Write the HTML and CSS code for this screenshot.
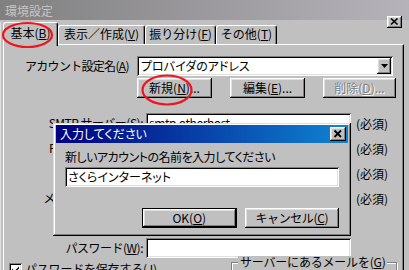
FILE: index.html
```
<!DOCTYPE html>
<html lang="ja">
<head>
<meta charset="utf-8">
<title>環境設定</title>
<link rel="stylesheet" href="styles.css">
</head>
<body>
<div class="screen">
  <div class="titlebar">
    <span class="title">環境設定</span>
    <span class="xbtn main-x"><svg width="15" height="12" viewBox="0 0 15 12"><path d="M4 2.5 L10.5 8.5 M10.5 2.5 L4 8.5" stroke="#000" stroke-width="1.7" fill="none"/></svg></span>
  </div>
  <div class="frame">
    <div class="tabs">
      <div class="tab sel t1">基本(<u>B</u>)</div>
      <div class="tab t2">表示／作成(<u>V</u>)</div>
      <div class="tab t3">振り分け(<u>F</u>)</div>
      <div class="tab t4">その他(<u>T</u>)</div>
    </div>
    <div class="panel">
      <div class="acct">
        <span class="acct-label">アカウント設定名(<u>A</u>)</span>
        <div class="combo">
          <span class="combo-text">プロバイダのアドレス</span>
          <span class="dropbtn"><svg width="7" height="4" viewBox="0 0 7 4"><path d="M0 0 H7 L3.5 4 Z" fill="#000"/></svg></span>
        </div>
      </div>
      <div class="acct-btns">
        <div class="btn b-new">新規(<u>N</u>)...</div>
        <div class="btn b-edit">編集(<u>E</u>)...</div>
        <div class="btn b-del disabled">削除(<u>D</u>)...</div>
      </div>
      <div class="form">
        <div class="frow"><span class="flabel">SMTP サーバー(<u>S</u>):</span><div class="field">smtp.otherhost</div><span class="req">(必須)</span></div>
        <div class="frow"><span class="flabel">POP3 サーバー(<u>P</u>):</span><div class="field"></div><span class="req">(必須)</span></div>
        <div class="frow"><span class="flabel"></span><div class="field"></div><span class="req">(必須)</span></div>
        <div class="frow"><span class="flabel">メールアドレス(<u>M</u>):</span><div class="field"></div><span class="req">(必須)</span></div>
        <div class="frow"><span class="flabel"></span><div class="field"></div></div>
        <div class="frow last"><span class="flabel">パスワード(<u>W</u>):</span><div class="field"></div></div>
      </div>
      <div class="bottom">
        <div class="check">
          <span class="cbox"><svg width="9" height="9" viewBox="0 0 9 9"><path d="M1 3.5 L3.5 6 L8 1.5 V3.5 L3.5 8 L1 5.5 Z" fill="#000"/></svg></span>
          <span class="check-text">パスワードを保存する(<u>J</u>)</span>
        </div>
        <fieldset class="group"><legend>サーバーにあるメールを(<u>G</u>)</legend></fieldset>
      </div>
    </div>
  </div>

  <div class="dialog">
    <div class="dlg-title">
      <span class="dlg-title-text">入力してください</span>
      <span class="xbtn dlg-x"><svg width="16" height="14" viewBox="0 0 16 14"><path d="M4.5 3.5 L11 10 M11 3.5 L4.5 10" stroke="#000" stroke-width="1.8" fill="none"/></svg></span>
    </div>
    <div class="dlg-body">
      <div class="dlg-text">新しいアカウントの名前を入力してください</div>
      <div class="field dlg-field">さくらインターネット</div>
      <div class="dlg-btns">
        <div class="btn default b-ok">OK(<u>O</u>)</div>
        <div class="btn b-cancel">キャンセル(<u>C</u>)</div>
      </div>
    </div>
  </div>

  <svg class="marks" width="409" height="270" viewBox="0 0 409 270">
    <ellipse cx="27.5" cy="35" rx="24.5" ry="12" fill="none" stroke="#f0141e" stroke-width="2.2"/>
    <ellipse cx="167" cy="90" rx="24.5" ry="14.5" fill="none" stroke="#f0141e" stroke-width="2.2"/>
  </svg>
</div>
</body>
</html>
```
FILE: styles.css
```
* { box-sizing: border-box; }
html, body { margin: 0; padding: 0; }
body {
  width: 409px;
  height: 270px;
  overflow: hidden;
  background: #c0c0c0;
  font-family: "Noto Sans CJK JP", "Noto Sans", sans-serif;
  font-size: 12px;
  color: #000;
}
u { text-decoration: underline; text-underline-offset: 1px; }

.screen {
  position: relative;
  width: 409px;
  height: 270px;
  overflow: hidden;
}

/* main title bar (inactive) */
.titlebar {
  height: 20px;
  display: flex;
  align-items: flex-start;
  padding-left: 5px;
  background: linear-gradient(to right, #808080, #b6b2ba);
}
.title {
  color: #c4c4c4;
  line-height: 20px;
  padding-top: 1px;
}
.xbtn {
  display: flex;
  background: #c0c0c0;
  box-shadow: inset -1px -1px #000, inset 1px 1px #fff, inset -2px -2px #808080, inset 2px 2px #dfdfdf;
}
.main-x {
  margin-left: auto;
  margin-right: 7px;
  margin-top: 16px;
  width: 15px;
  height: 12px;
  position: relative;
  z-index: 2;
}

/* tabs */
.frame {
  margin-top: 2px;
  border-left: 1px solid #dfdfdf;
}
.tabs {
  display: flex;
  align-items: flex-end;
  height: 22px;
  padding-left: 2px;
  position: relative;
  z-index: 1;
}
.tab {
  height: 19px;
  line-height: 16px;
  text-align: center;
  white-space: nowrap;
  background: #c0c0c0;
  border-top: 1px solid #fff;
  border-left: 1px solid #fff;
  border-right: 1px solid #000;
  border-radius: 3px 3px 0 0;
  box-shadow: inset -1px 0 #808080;
}
.tab.sel {
  height: 24px;
  margin-bottom: -2px;
  padding-top: 2px;
}
.t1 { width: 55px; }
.t2 { width: 87px; }
.t3 { width: 71px; }
.t4 { width: 61px; }

/* panel */
.panel {
  width: 401px;
  height: 240px;
  margin-left: 2px;
  border-top: 1px solid #fff;
  border-left: 1px solid #fff;
  border-right: 1px solid #000;
  box-shadow: inset -1px 0 #808080;
}
.acct {
  display: flex;
  align-items: center;
  margin-top: 11px;
  padding-left: 21px;
  height: 20px;
}
.acct-label {
  width: 112px;
  line-height: 20px;
  white-space: nowrap;
  letter-spacing: -0.7px;
}
.combo {
  width: 256px;
  height: 20px;
  background: #fff;
  display: flex;
  align-items: center;
  padding: 2px;
  box-shadow: inset 1px 1px #808080, inset -1px -1px #fff, inset 2px 2px #000, inset -2px -2px #dfdfdf;
}
.combo-text { flex: 1; padding-left: 2px; line-height: 16px; font-feature-settings: "palt"; }
.dropbtn {
  width: 14px;
  height: 16px;
  display: flex;
  align-items: center;
  justify-content: center;
  background: #c0c0c0;
  box-shadow: inset -1px -1px #000, inset 1px 1px #fff, inset -2px -2px #808080, inset 2px 2px #dfdfdf;
}

.btn {
  height: 20px;
  line-height: 20px;
  text-align: center;
  white-space: nowrap;
  background: #c0c0c0;
  box-shadow: inset -1px -1px #000, inset 1px 1px #fff, inset -2px -2px #808080, inset 2px 2px #dfdfdf;
}
.btn.default { border: 1px solid #000; line-height: 18px; }
.btn.disabled { color: #808080; text-shadow: 1px 1px 0 #fff; }

.acct-btns {
  display: flex;
  margin-top: 2px;
  padding-left: 133px;
  gap: 18px;
}
.b-new, .b-edit { width: 75px; }
.b-del { width: 73px; }

/* form */
.form { margin-top: 15px; }
.frow {
  display: flex;
  align-items: flex-start;
  height: 25px;
}
.frow.last { height: 20px; }
.flabel {
  width: 139px;
  margin-right: 3px;
  text-align: right;
  line-height: 20px;
  white-space: nowrap;
  letter-spacing: -0.5px;
}
.field {
  width: 205px;
  height: 20px;
  background: #fff;
  padding: 0 3px;
  line-height: 20px;
  letter-spacing: -0.4px;
  white-space: nowrap;
  box-shadow: inset 1px 1px #808080, inset -1px -1px #fff, inset 2px 2px #000, inset -2px -2px #dfdfdf;
}
.req { margin-left: 5px; line-height: 22px; }

/* bottom */
.bottom {
  display: flex;
  align-items: flex-start;
  margin-top: -2px;
}
.check {
  display: flex;
  align-items: center;
  gap: 3px;
  margin-left: 5px;
  margin-top: 6px;
}
.cbox {
  width: 13px;
  height: 13px;
  background: #fff;
  display: flex;
  align-items: center;
  justify-content: center;
  box-shadow: inset 1px 1px #808080, inset -1px -1px #fff, inset 2px 2px #000, inset -2px -2px #dfdfdf;
}
.check-text { line-height: 14px; white-space: nowrap; letter-spacing: -0.2px; }
.group {
  margin: 0 6px 0 auto;
  padding: 0;
  width: 166px;
  height: 30px;
  border: 1px solid #808080;
  box-shadow: 1px 1px 0 #fff, inset 1px 1px 0 #fff;
}
.group legend {
  margin-left: 6px;
  padding: 0 2px;
  line-height: 12px;
  background: #c0c0c0;
  white-space: nowrap;
  letter-spacing: -0.2px;
}

/* dialog */
.dialog {
  position: absolute;
  left: 53px;
  top: 123px;
  width: 298px;
  height: 113px;
  background: #c0c0c0;
  padding: 2px 3px 3px 3px;
  box-shadow: inset -1px -1px #000, inset 1px 1px #dfdfdf, inset -2px -2px #808080, inset 2px 2px #fff;
  z-index: 3;
}
.dlg-title {
  height: 18px;
  display: flex;
  align-items: center;
  padding-left: 4px;
  background: linear-gradient(to right, #000080, #1084d0);
}
.dlg-title-text {
  color: #fff;
  line-height: 18px;
  font-feature-settings: "palt";
}
.dlg-x {
  margin-left: auto;
  margin-right: 2px;
  width: 16px;
  height: 14px;
}
.dlg-body {
  padding: 0 9px;
}
.dlg-text {
  margin-top: 7px;
  line-height: 14px;
  white-space: nowrap;
  letter-spacing: -0.5px;
  font-feature-settings: "palt";
}
.dlg-field {
  width: 274px;
  margin-top: 3px;
  letter-spacing: 0;
  font-feature-settings: "palt";
}
.dlg-btns {
  display: flex;
  gap: 8px;
  margin-top: 21px;
  padding-left: 77px;
}
.b-ok, .b-cancel { width: 95px; }
.b-cancel { letter-spacing: -0.4px; }

.marks {
  position: absolute;
  left: 0;
  top: 0;
  z-index: 5;
  pointer-events: none;
}
```
